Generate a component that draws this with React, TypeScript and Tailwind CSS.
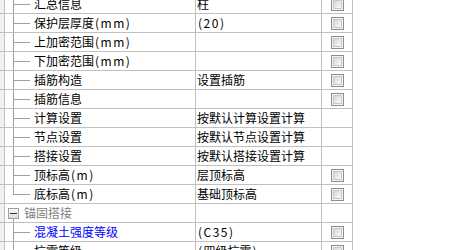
type Tree = 'mid' | 'last' | 'section'

interface Row {
  name: string
  value?: string
  check?: boolean
  tree: Tree
  tone?: 'blue' | 'gray'
}

const rows: Row[] = [
  { name: '汇总信息', value: '柱', check: true, tree: 'mid' },
  { name: '保护层厚度(mm)', value: '(20)', check: true, tree: 'mid' },
  { name: '上加密范围(mm)', check: true, tree: 'mid' },
  { name: '下加密范围(mm)', check: true, tree: 'mid' },
  { name: '插筋构造', value: '设置插筋', check: true, tree: 'mid' },
  { name: '插筋信息', check: true, tree: 'mid' },
  { name: '计算设置', value: '按默认计算设置计算', tree: 'mid' },
  { name: '节点设置', value: '按默认节点设置计算', tree: 'mid' },
  { name: '搭接设置', value: '按默认搭接设置计算', tree: 'mid' },
  { name: '顶标高(m)', value: '层顶标高', check: true, tree: 'mid' },
  { name: '底标高(m)', value: '基础顶标高', check: true, tree: 'last' },
  { name: '锚固搭接', tree: 'section', tone: 'gray' },
  { name: '混凝土强度等级', value: '(C35)', check: true, tree: 'mid', tone: 'blue' },
  { name: '抗震等级', value: '(四级抗震)', check: true, tree: 'mid' },
]

// half-width runs get a little extra room, like the old bitmap font
function Label({ text }: { text: string }) {
  const parts = text.split(/([\x20-\x7e]+)/).filter(Boolean)
  return (
    <>
      {parts.map((p, i) =>
        /^[\x20-\x7e]+$/.test(p) ? (
          <span key={i} className="tracking-[1.5px] pl-[1px]">
            {p}
          </span>
        ) : (
          <span key={i}>{p}</span>
        ),
      )}
    </>
  )
}

function Checkbox() {
  return (
    <div className="w-[13px] h-[13px] border border-[#8e8e8e] bg-[#f4f4f4] p-[1px]">
      <div className="w-full h-full border border-[#c8c8cc] bg-gradient-to-br from-[#d6d6dc] to-[#fafafa]" />
    </div>
  )
}

function TreeCell({ tree }: { tree: Tree }) {
  if (tree === 'section') {
    return (
      <div className="flex flex-col pl-[3px] pt-[4px] h-full">
        {/* collapse box */}
        <div className="w-[11px] h-[11px] border border-[#a0a0a0] bg-gradient-to-b from-[#f8f8f8] to-[#dcdcdc] flex items-center justify-center">
          <div className="w-[7px] h-[1px] bg-[#303030]" />
        </div>
        <div className="ml-[5px] flex-1 border-l border-[#a0a0a0]" />
      </div>
    )
  }
  return (
    <div className="flex flex-col pl-[8px] h-full">
      <div className="w-[17px] h-[10px] border-l border-b border-[#a0a0a0]" />
      <div className={tree === 'mid' ? 'flex-1 border-l border-[#a0a0a0]' : 'flex-1'} />
    </div>
  )
}

export default function App() {
  return (
    <div className="w-[469px] h-[250px] overflow-hidden bg-white font-['Noto_Sans_CJK_SC',sans-serif] text-[12px] leading-[18px] text-black">
      <div className="-mt-[5px]">
        {rows.map((row, i) => (
          <div key={i} className="flex h-[19px] w-[353px] border-b border-[#c0c0c0]">
            <div className="w-[5px] h-full bg-[#f0f0f0] border-r border-[#c0c0c0]" />
            <div className="w-[191px] h-full flex border-r border-[#c0c0c0]">
              <TreeCell tree={row.tree} />
              <span
                className={
                  row.tone === 'blue'
                    ? 'ml-[4px] text-[#0000ff] whitespace-nowrap'
                    : row.tone === 'gray'
                      ? 'ml-[5px] text-[#808080] whitespace-nowrap'
                      : 'ml-[4px] whitespace-nowrap'
                }
              >
                <Label text={row.name} />
              </span>
            </div>
            <div className="w-[126px] h-full pl-[1px] border-r border-[#c0c0c0] whitespace-nowrap overflow-hidden">
              {row.value && <Label text={row.value} />}
            </div>
            <div className="w-[31px] h-full flex items-center justify-center border-r border-[#c0c0c0]">
              {row.check && <Checkbox />}
            </div>
          </div>
        ))}
      </div>
    </div>
  )
}
